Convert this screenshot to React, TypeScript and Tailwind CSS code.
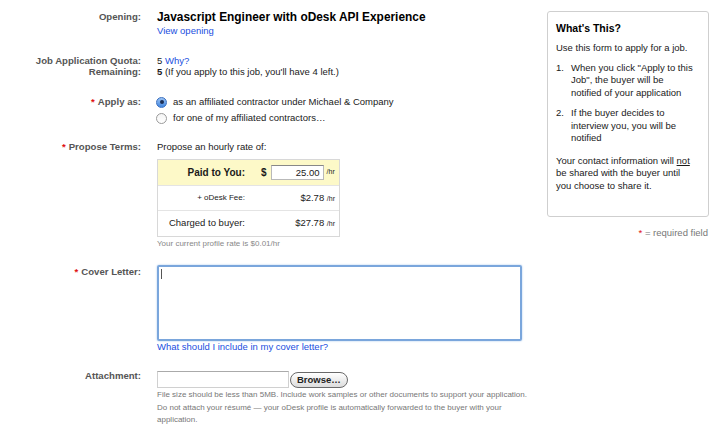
import React from 'react'

const font = { fontFamily: '"Liberation Sans", Arial, sans-serif' }

function Label({ children, req }: { children: React.ReactNode; req?: boolean }) {
  return (
    <div className="w-[141px] shrink-0 text-right text-[9.6px] font-bold text-[#555] leading-[14px]">
      {req && <span className="text-[#e01010] mr-[3px]">*</span>}
      {children}
    </div>
  )
}

function Radio({ checked }: { checked?: boolean }) {
  return (
    <span
      className={`inline-flex items-center justify-center w-[11px] h-[11px] rounded-full border shrink-0 ${
        checked ? 'border-[#3a6fc0] bg-gradient-to-b from-[#9cc3f2] to-[#3f86e0]' : 'border-[#9a9a9a] bg-gradient-to-b from-[#f4f4f4] to-white'
      }`}
    >
      {checked && <span className="w-[4px] h-[4px] rounded-full bg-[#1c2f55]" />}
    </span>
  )
}

export default function App() {
  return (
    <div style={font} className="w-[715px] h-[427px] bg-white overflow-hidden text-[#1a1a1a] flex">
      {/* Form */}
      <div className="w-[530px] shrink-0">
        {/* Opening */}
        <div className="flex pt-[10px]">
          <Label>Opening:</Label>
          <div className="ml-[16px]">
            <div className="text-[11.9px] font-bold text-[#000] leading-[14px]">
              Javascript Engineer with oDesk API Experience
            </div>
            <a className="block text-[9.5px] text-[#1a4fe0] leading-[14px]">View opening</a>
          </div>
        </div>

        {/* Quota */}
        <div className="flex mt-[17px]">
          <div className="w-[141px] shrink-0 text-right text-[9.6px] font-bold text-[#555] leading-[11px]">
            <div>Job Application Quota:</div>
            <div>Remaining:</div>
          </div>
          <div className="ml-[16px] text-[9.5px] leading-[11px]">
            <div>
              5 <a className="text-[#1a4fe0]">Why?</a>
            </div>
            <div>
              <span className="font-bold">5</span> (If you apply to this job, you'll have 4 left.)
            </div>
          </div>
        </div>

        {/* Apply as */}
        <div className="flex mt-[17px]">
          <div className="w-[141px] shrink-0 text-right text-[9.6px] font-bold text-[#555] leading-[16px]">
            <span className="text-[#e01010] mr-[3px]">*</span>Apply as:
          </div>
          <div className="ml-[16px] text-[9.5px] leading-[16px]">
            <div className="flex items-center gap-[6px] -ml-px">
              <Radio checked />
              <span>as an affiliated contractor under Michael &amp; Company</span>
            </div>
            <div className="flex items-center gap-[6px] -ml-px">
              <Radio />
              <span>for one of my affiliated contractors…</span>
            </div>
          </div>
        </div>

        {/* Propose Terms */}
        <div className="flex mt-[14px]">
          <Label req>Propose Terms:</Label>
          <div className="ml-[16px]">
            <div className="text-[9.5px] leading-[14px]">Propose an hourly rate of:</div>
            <div className="mt-[5px] w-[183px] border border-[#d8d8d8]">
              <div className="flex items-center h-[26px] bg-[#fdf9c8] border-b border-[#e4e4e4]">
                <div className="w-[87px] text-right text-[10px] font-bold">Paid to You:</div>
                <div className="ml-[16px] text-[10px] font-bold">$</div>
                <div className="ml-[4px] w-[53px] h-[15px] bg-white border border-[#b9b9b9] border-t-[#888] text-right text-[9.5px] leading-[13px] pr-[3px]">
                  25.00
                </div>
                <div className="ml-[3px] text-[7px]">/hr</div>
              </div>
              <div className="flex items-center h-[25px] border-b border-[#e4e4e4]">
                <div className="w-[87px] text-right text-[8px]">+ oDesk Fee:</div>
                <div className="flex-1 text-right pr-[4px] text-[9.5px]">
                  $2.78 <span className="text-[7px]">/hr</span>
                </div>
              </div>
              <div className="flex items-center h-[25px]">
                <div className="w-[87px] text-right text-[9.5px]">Charged to buyer:</div>
                <div className="flex-1 text-right pr-[4px] text-[9.5px]">
                  $27.78 <span className="text-[7px]">/hr</span>
                </div>
              </div>
            </div>
            <div className="text-[8px] text-[#888] leading-[10px] mt-[2px]">Your current profile rate is $0.01/hr</div>
          </div>
        </div>

        {/* Cover Letter */}
        <div className="flex mt-[16px]">
          <Label req>Cover Letter:</Label>
          <div className="ml-[16px]">
            <div className="w-[365px] h-[76px] border-2 border-[#7aa6dc] rounded-[2px] shadow-[0_0_2px_#9cc0ea] p-[2px]">
              <span className="block w-px h-[10px] bg-[#555]" />
            </div>
            <a className="block text-[9.5px] text-[#1a4fe0] leading-[12px]">What should I include in my cover letter?</a>
          </div>
        </div>

        {/* Attachment */}
        <div className="flex mt-[16px]">
          <Label>Attachment:</Label>
          <div className="ml-[16px]">
            <div className="flex items-end h-[19px]">
              <div className="w-[132px] h-[17px] bg-white border border-[#d0d0d0] border-t-[#aaa]" />
              <div className="ml-[1px] h-[16px] px-[6px] rounded-full border border-[#6a6a6a] bg-gradient-to-b from-white to-[#dcdcdc] text-[9.5px] font-bold text-[#222] leading-[14px]">
                Browse…
              </div>
            </div>
            <div className="text-[8px] text-[#777] leading-[12.5px] mt-[1px]">
              File size should be less than 5MB. Include work samples or other documents to support your application.
              <br />
              Do not attach your résumé — your oDesk profile is automatically forwarded to the buyer with your
              <br />
              application.
            </div>
          </div>
        </div>
      </div>

      {/* Sidebar */}
      <div className="ml-[17px] w-[162px] shrink-0">
        <div className="mt-[11px] h-[206px] border border-[#cfcfcf] rounded-[3px] px-[8px] pt-[9px] text-[9.5px] leading-[12.5px]">
          <div className="text-[10.5px] font-bold text-[#000] leading-[14px]">What's This?</div>
          <div className="mt-[7px]">Use this form to apply for a job.</div>
          <ol className="mt-[7px]">
            <li className="flex">
              <span className="w-[15px] shrink-0">1.</span>
              <span>
                When you click "Apply to this
                <br />
                Job", the buyer will be
                <br />
                notified of your application
              </span>
            </li>
            <li className="flex mt-[8px]">
              <span className="w-[15px] shrink-0">2.</span>
              <span>
                If the buyer decides to
                <br />
                interview you, you will be
                <br />
                notified
              </span>
            </li>
          </ol>
          <div className="mt-[10px]">
            Your contact information will <span className="underline">not</span>
            <br />
            be shared with the buyer until
            <br />
            you choose to share it.
          </div>
        </div>
        <div className="mt-[10px] text-right text-[9.5px] text-[#777] leading-[12px] pr-px">
          <span className="text-[#e01010]">*</span> = required field
        </div>
      </div>
    </div>
  )
}
